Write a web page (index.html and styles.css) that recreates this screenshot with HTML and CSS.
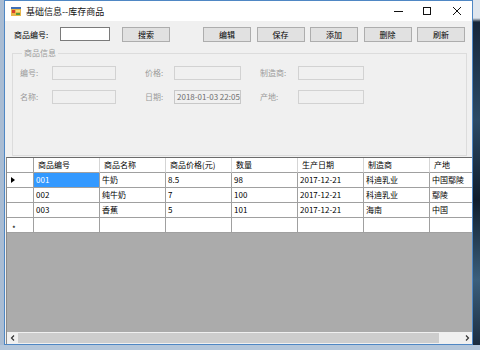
FILE: index.html
```html
<!DOCTYPE html>
<html lang="zh-CN">
<head>
  <meta charset="UTF-8" />
  <title>基础信息--库存商品</title>
  <link rel="stylesheet" href="styles.css">
</head>
<body>
  <div class="screen">
    <div class="desk-left"></div>

    <div class="window">
      <div class="titlebar">
        <svg class="app-icon" width="10" height="9" viewBox="0 0 10 9">
          <rect x="0" y="0" width="10" height="9" fill="#e8b64a"/>
          <rect x="0" y="0" width="10" height="2" fill="#3f6fb6"/>
          <rect x="1" y="3" width="3" height="3" fill="#d9412b"/>
          <rect x="5" y="3" width="4" height="2" fill="#f7e27a"/>
          <rect x="5" y="6" width="4" height="2" fill="#5a9a3a"/>
        </svg>
        <span class="title">基础信息--库存商品</span>
        <div class="caption-btns">
          <div class="cap-btn">
            <svg width="10" height="10" viewBox="0 0 10 10"><path d="M0 5.5H9" stroke="#111" stroke-width="1"/></svg>
          </div>
          <div class="cap-btn">
            <svg width="10" height="10" viewBox="0 0 10 10"><rect x="1.5" y="1.5" width="7" height="7" fill="none" stroke="#111" stroke-width="1"/></svg>
          </div>
          <div class="cap-btn cap-close">
            <svg width="10" height="10" viewBox="0 0 10 10"><path d="M1 1L9 9M9 1L1 9" stroke="#111" stroke-width="1"/></svg>
          </div>
        </div>
      </div>

      <div class="client">
        <div class="toolbar">
          <span class="lbl">商品编号:</span>
          <div class="textbox"></div>
          <button class="btn btn-search">搜索</button>
          <div class="actions">
            <button class="btn">编辑</button>
            <button class="btn">保存</button>
            <button class="btn">添加</button>
            <button class="btn">删除</button>
            <button class="btn">刷新</button>
          </div>
        </div>

        <fieldset class="group">
          <legend>商品信息</legend>
          <div class="fields">
            <span class="f-lbl">编号:</span>
            <div class="f-box"></div>
            <span class="f-lbl f-lbl2">价格:</span>
            <div class="f-box f-box2"></div>
            <span class="f-lbl f-lbl3">制造商:</span>
            <div class="f-box"></div>

            <span class="f-lbl">名称:</span>
            <div class="f-box"></div>
            <span class="f-lbl f-lbl2">日期:</span>
            <div class="f-box f-box2 f-date">2018-01-03 22:05</div>
            <span class="f-lbl f-lbl3">产地:</span>
            <div class="f-box"></div>
          </div>
        </fieldset>

        <div class="grid-view">
          <div class="grid">
            <div class="cell rh"></div>
            <div class="cell hd">商品编号</div>
            <div class="cell hd">商品名称</div>
            <div class="cell hd">商品价格(元)</div>
            <div class="cell hd">数量</div>
            <div class="cell hd">生产日期</div>
            <div class="cell hd">制造商</div>
            <div class="cell hd">产地</div>

            <div class="cell rh"><span class="arrow"></span></div>
            <div class="cell selected">001</div>
            <div class="cell">牛奶</div>
            <div class="cell">8.5</div>
            <div class="cell">98</div>
            <div class="cell">2017-12-21</div>
            <div class="cell">科迪乳业</div>
            <div class="cell">中国鄢陵</div>

            <div class="cell rh"></div>
            <div class="cell">002</div>
            <div class="cell">纯牛奶</div>
            <div class="cell">7</div>
            <div class="cell">100</div>
            <div class="cell">2017-12-21</div>
            <div class="cell">科迪乳业</div>
            <div class="cell">鄢陵</div>

            <div class="cell rh"></div>
            <div class="cell">003</div>
            <div class="cell">香蕉</div>
            <div class="cell">5</div>
            <div class="cell">101</div>
            <div class="cell">2017-12-21</div>
            <div class="cell">海南</div>
            <div class="cell">中国</div>

            <div class="cell rh new-row">*</div>
            <div class="cell"></div>
            <div class="cell"></div>
            <div class="cell"></div>
            <div class="cell"></div>
            <div class="cell"></div>
            <div class="cell"></div>
            <div class="cell"></div>
          </div>
          <div class="grid-empty"></div>
          <div class="hscroll">
            <div class="sb-arrow">
              <svg width="6" height="6" viewBox="0 0 6 6"><path d="M4 0.5L1.5 3L4 5.5" fill="none" stroke="#333" stroke-width="1.2"/></svg>
            </div>
            <div class="sb-track"><div class="sb-thumb"></div></div>
            <div class="sb-arrow">
              <svg width="6" height="6" viewBox="0 0 6 6"><path d="M2 0.5L4.5 3L2 5.5" fill="none" stroke="#333" stroke-width="1.2"/></svg>
            </div>
          </div>
        </div>
      </div>
    </div>

    <div class="desk-right"></div>
  </div>
</body>
</html>
```

FILE: styles.css
```css
body {
  margin: 0;
  background-color: #b4c6da;
  font-family: "Noto Sans CJK SC", "Noto Sans", sans-serif;
  font-size: 8px;
  color: #000;
}

.screen {
  display: flex;
  height: 345px;
}

.desk-left {
  width: 4px;
  background-color: #a9bcd3;
}

.desk-right {
  flex: 1;
  background: linear-gradient(180deg, #dfe6ee 0, #dfe6ee 18px, #16263a 22px, #2b4a66 120px, #0f1d2d 200px, #3b5f7c 280px, #1b2c40 345px);
}

.window {
  width: 469px;
  box-sizing: border-box;
  border: 1px solid #4f87c4;
  display: flex;
  flex-direction: column;
  background-color: #f0f0f0;
}

/* title bar */
.titlebar {
  height: 20px;
  background-color: #fff;
  display: flex;
  align-items: center;
}

.app-icon {
  margin-left: 6px;
  margin-top: 1px;
}

.title {
  margin-left: 5px;
  font-size: 9px;
  color: #111;
}

.caption-btns {
  margin-left: auto;
  display: flex;
  height: 100%;
}

.cap-btn {
  width: 28px;
  display: flex;
  align-items: center;
  justify-content: center;
}

.cap-close {
  width: 31px;
}

/* client area */
.client {
  flex: 1;
  display: flex;
  flex-direction: column;
}

.toolbar {
  display: flex;
  align-items: center;
  padding: 5px 0 0 9px;
  height: 17px;
}

.lbl {
  width: 46px;
}

.textbox {
  width: 50px;
  height: 14px;
  box-sizing: border-box;
  background-color: #fff;
  border: 1px solid #7a7a7a;
  margin-top: -2px;
}

.btn {
  width: 48px;
  height: 15px;
  box-sizing: border-box;
  padding: 0;
  background-color: #e1e1e1;
  border: 1px solid #adadad;
  font-family: "Noto Sans CJK SC", sans-serif;
  font-size: 8px;
  line-height: 12px;
  color: #000;
}

.btn-search {
  margin-left: 12px;
}

.actions {
  display: flex;
  gap: 5.5px;
  margin-left: 33px;
}

/* group box */
.group {
  margin: 5px 5px 0 7px;
  padding: 0 0 51px 7px;
  border: 1px solid #dcdcdc;
  min-width: 0;
}

.group legend {
  margin-left: 2px;
  padding: 0 2px;
  line-height: 10px;
  color: #9a9a9a;
}

.fields {
  display: grid;
  grid-template-columns: 32px 64px 58px 67px 57px 66px;
  row-gap: 10px;
  margin-top: 8px;
  align-items: center;
}

.f-lbl {
  color: #9a9a9a;
  line-height: 14px;
}

.f-lbl2 {
  padding-left: 29px;
}

.f-lbl3 {
  padding-left: 19px;
}

.f-box {
  height: 14px;
  box-sizing: border-box;
  border: 1px solid #d2d2d2;
  background-color: #f0f0f0;
}

.f-date {
  overflow: hidden;
  white-space: nowrap;
  padding-left: 2px;
  line-height: 12px;
  font-size: 8px;
  color: #6d6d6d;
  border-color: #c8c8c8;
}

/* data grid */
.grid-view {
  flex: 1;
  margin: 1px 0 0 1px;
  display: flex;
  flex-direction: column;
  border-top: 1px solid #6b6b6b;
  border-left: 1px solid #8a8a8a;
  overflow: hidden;
}

.grid {
  display: grid;
  grid-template-columns: 27px repeat(7, 66px);
  background-color: #fff;
}

.cell {
  height: 15px;
  box-sizing: border-box;
  border-right: 1px solid #a0a0a0;
  border-bottom: 1px solid #a0a0a0;
  padding-left: 2px;
  line-height: 14px;
  white-space: nowrap;
  overflow: hidden;
}

.hd {
  padding-left: 4px;
  border-right-color: #d5d5d5;
  border-bottom-color: #a0a0a0;
}

.rh {
  position: relative;
  padding-left: 0;
}

.arrow {
  position: absolute;
  left: 4px;
  top: 4px;
  width: 0;
  height: 0;
  border-left: 4px solid #000;
  border-top: 3px solid transparent;
  border-bottom: 3px solid transparent;
}

.new-row {
  padding: 4px 0 0 5px;
  font-size: 8px;
}

.selected {
  background-color: #3399ff;
  color: #fff;
}

.grid-empty {
  flex: 1;
  background-color: #ababab;
}

.hscroll {
  height: 12px;
  display: flex;
  background-color: #f0f0f0;
}

.sb-arrow {
  width: 11px;
  display: flex;
  align-items: center;
  justify-content: center;
}

.sb-track {
  flex: 1;
  padding: 1px 0;
  box-sizing: border-box;
}

.sb-thumb {
  width: 421px;
  height: 100%;
  background-color: #cdcdcd;
}
```
